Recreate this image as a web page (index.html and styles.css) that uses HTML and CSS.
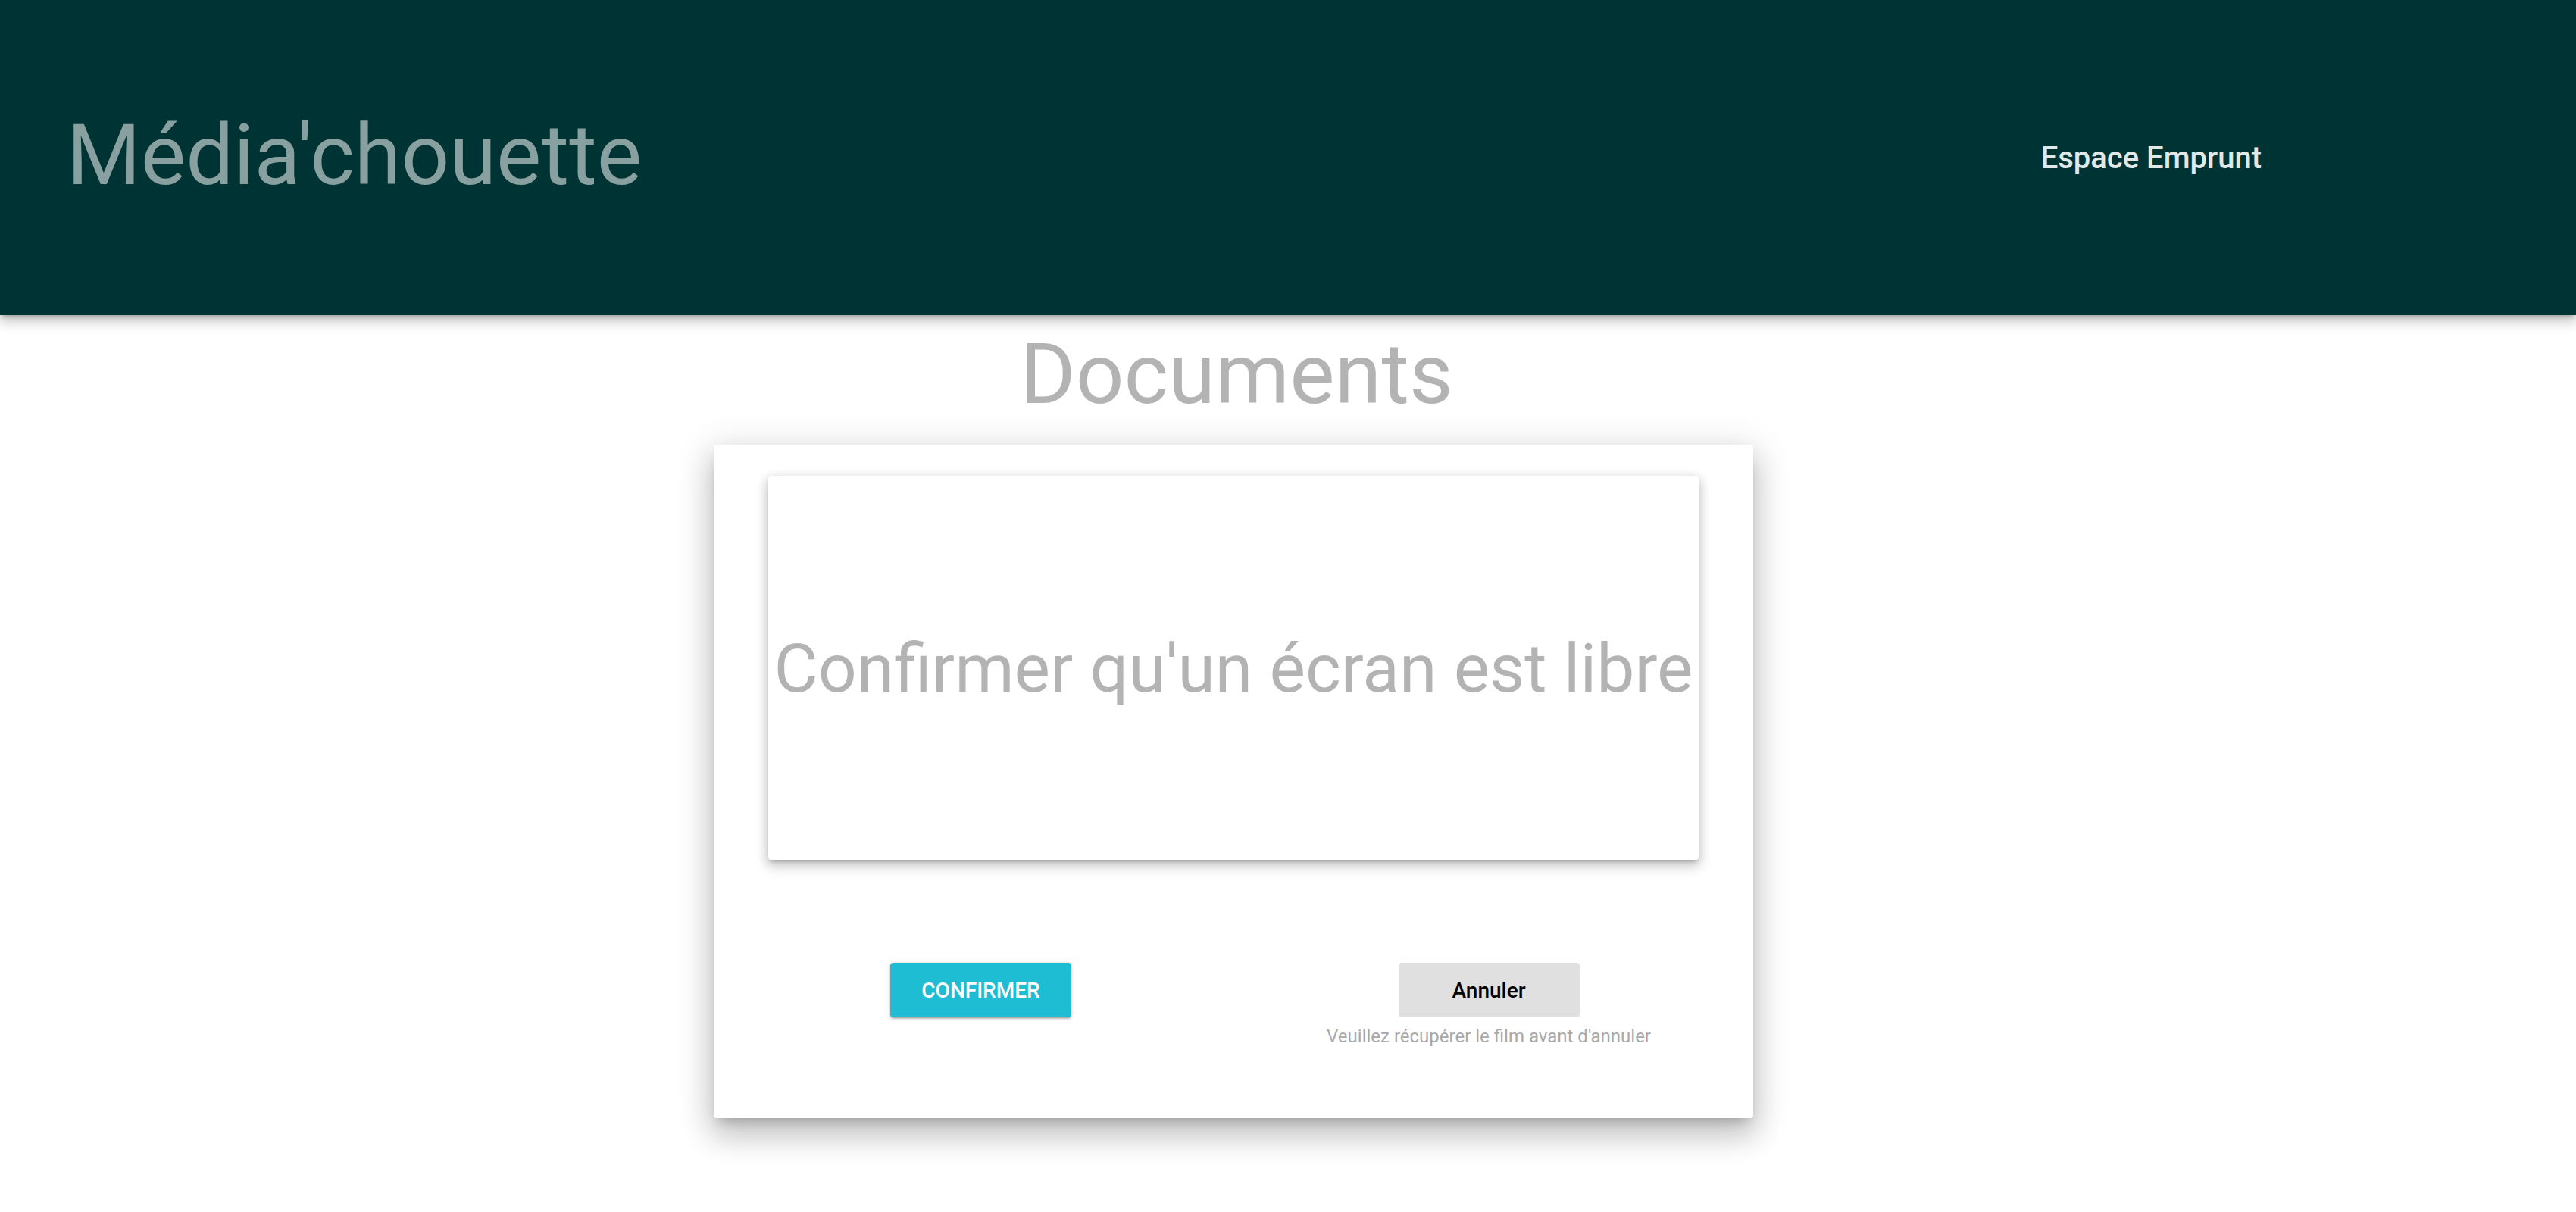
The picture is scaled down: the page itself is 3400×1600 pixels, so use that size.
FILE: index.html
```html
<!DOCTYPE html>
<html lang="fr">
<head>
<meta charset="utf-8">
<title>Média'chouette</title>
<link rel="stylesheet" href="styles.css">
</head>
<body>
<header class="topbar">
  <a class="brand">Média'chouette</a>
  <nav class="nav"><a class="nav-link">Espace Emprunt</a></nav>
</header>
<main class="main">
  <h1 class="page-title">Documents</h1>
  <section class="dialog">
    <div class="message-card">
      <p class="message">Confirmer qu'un écran est libre</p>
    </div>
    <div class="actions">
      <div class="action-col">
        <button class="btn btn-primary">CONFIRMER</button>
      </div>
      <div class="action-col">
        <button class="btn btn-flat">Annuler</button>
        <p class="hint">Veuillez récupérer le film avant d'annuler</p>
      </div>
    </div>
  </section>
</main>
</body>
</html>
```
FILE: styles.css
```css
html, body {
  margin: 0;
  padding: 0;
  background: #ffffff;
  font-family: Roboto, "Noto Sans", "Liberation Sans", sans-serif;
}
.topbar {
  height: 416px;
  background: #003333;
  display: flex;
  align-items: center;
  padding: 0 415px 0 88px;
  box-shadow: 0 8px 17px 2px rgba(0,0,0,.14), 0 3px 14px 2px rgba(0,0,0,.12), 0 5px 5px -3px rgba(0,0,0,.2);
  position: relative;
  z-index: 2;
}
.brand {
  font-size: 112px;
  font-weight: 400;
  color: #88a09f;
  line-height: 1;
  margin-top: -6px;
}
.nav {
  margin-left: auto;
}
.nav-link {
  font-size: 40px;
  font-weight: 500;
  color: #e2e8e8;
}
.main {
  display: flex;
  flex-direction: column;
  align-items: center;
  padding: 0 144px 100px 0;
}
.page-title {
  margin: 12px 0 28px;
  font-size: 112px;
  font-weight: 400;
  line-height: normal;
  color: #b3b3b3;
  transform: translateX(4px);
}
.dialog {
  width: 1228px;
  padding: 42px 72px 94px;
  background: #fff;
  border-radius: 4px;
  box-shadow: 0 24px 38px 3px rgba(0,0,0,.14), 0 9px 46px 8px rgba(0,0,0,.12), 0 11px 15px -7px rgba(0,0,0,.2);
}
.message-card {
  height: 506px;
  border-radius: 4px;
  background: #fff;
  display: flex;
  align-items: center;
  justify-content: center;
  box-shadow: 0 8px 17px 2px rgba(0,0,0,.14), 0 3px 14px 2px rgba(0,0,0,.12), 0 5px 5px -3px rgba(0,0,0,.2);
}
.message {
  margin: 0;
  font-size: 89.5px;
  color: #b3b3b3;
  white-space: nowrap;
}
.actions {
  margin-top: 136px;
  padding: 0 63px 0 161px;
  display: flex;
  justify-content: space-between;
  align-items: flex-start;
}
.action-col {
  display: flex;
  flex-direction: column;
  align-items: center;
}
.btn {
  width: 239px;
  height: 72px;
  border: none;
  border-radius: 4px;
  font-family: Roboto, "Noto Sans", "Liberation Sans", sans-serif;
  font-size: 28px;
  font-weight: 500;
  padding: 0;
}
.btn-primary {
  background: #1ebdd4;
  color: #fff;
  box-shadow: 0 2px 2px 0 rgba(0,0,0,.14), 0 3px 1px -2px rgba(0,0,0,.12), 0 1px 5px 0 rgba(0,0,0,.2);
}
.btn-flat {
  background: #e0e0e0;
  color: #000;
}
.hint {
  margin: 11px 0 0;
  font-size: 24px;
  line-height: 28px;
  color: #a8a8a8;
}
```
